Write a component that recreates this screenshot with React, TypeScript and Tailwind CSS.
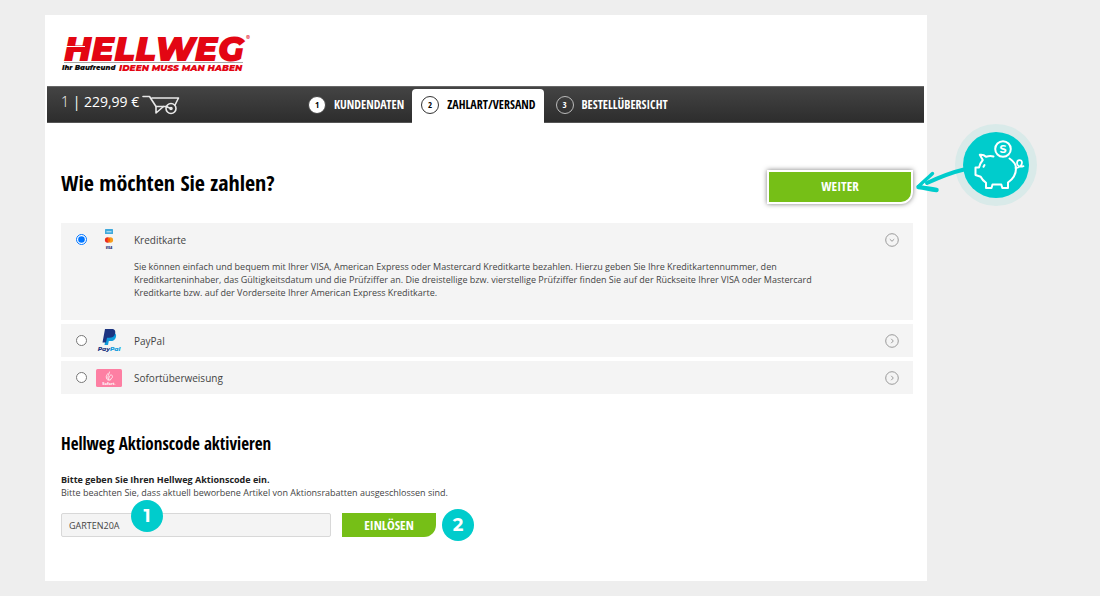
import React, { useState } from 'react';

const condensed = "font-['Open_Sans_Condensed','Open_Sans',sans-serif]";

function Logo() {
  return (
    <svg width="196" height="52" viewBox="0 0 196 52" role="img" aria-label="Hellweg" className="block">
      <text x="3" y="36" fontFamily="Montserrat, sans-serif" fontWeight="900" fontStyle="italic" fontSize="34" fill="#e30613">
        HELLWEG
      </text>
      <path d="M4 21.500H24" stroke="#fff" strokeWidth="1" />
      <text x="185" y="15" fontFamily="Inter, sans-serif" fontSize="6" fill="#e30613">
        ®
      </text>
      <path d="M3 37.500H182" stroke="#a8a8a8" strokeWidth="1" />
      <text x="1" y="45" fontFamily="Montserrat, sans-serif" fontWeight="900" fontStyle="italic" fontSize="7" fill="#111">
        Ihr Baufreund
      </text>
      <text x="58" y="46" fontFamily="Montserrat, sans-serif" fontWeight="900" fontStyle="italic" fontSize="9" fill="#e30613">
        IDEEN MUSS MAN HABEN
      </text>
    </svg>
  );
}

function Wheelbarrow() {
  return (
    <svg width="38" height="20" viewBox="0 0 38 20" fill="none" stroke="#e8e8e8" strokeWidth="1.6" strokeLinejoin="round" strokeLinecap="round" aria-hidden="true">
      <path d="M1 1.500h6.500l6.500 10h11M10 3H36.500L33 10" />
      <path d="M14 11.500v6.500l7.500-6.500" />
      <circle cx="29" cy="13.500" r="5" />
      <circle cx="29" cy="13.500" r="1" />
      <path d="M24 11.500l5 2" />
    </svg>
  );
}

function Step({ n, label, state }: { n: number; label: string; state: 'done' | 'active' | 'open' }) {
  const tab = state === 'active' ? 'bg-white text-black rounded-t pl-[9px]' : state === 'done' ? 'text-white pl-2' : 'text-white pl-3';
  const dot =
    state === 'done'
      ? 'bg-white text-black border-[#444]'
      : state === 'active'
        ? 'bg-white text-black border-[#333]'
        : 'text-white border-[#bbb]';
  return (
    <li className={`flex pr-2 ${tab}`}>
      <a href="#" aria-current={state === 'active' ? 'step' : undefined} className="flex items-center gap-2 pb-[3px]">
        <span className={`flex size-[18px] items-center justify-center rounded-full border text-[9px] leading-none ${dot}`}>{n}</span>
        <span className="text-[12px] leading-4">{label}</span>
      </a>
    </li>
  );
}

function CardLogos() {
  return (
    <svg width="14" height="22" viewBox="-2 0 14 22" aria-hidden="true">
      <rect x="1" y="0" width="8" height="5" rx="0.5" fill="#3fa9dc" />
      <rect x="2.500" y="2" width="5" height="1.400" fill="#a5d8f0" />
      <circle cx="3.600" cy="11" r="2.700" fill="#eb2a1c" />
      <circle cx="6.400" cy="11" r="2.700" fill="#f79e1b" />
      <path d="M5 8.700a2.700 2.700 0 0 1 0 4.600a2.700 2.700 0 0 1 0-4.600" fill="#ff5f00" />
      <text x="5" y="20" textAnchor="middle" fontFamily="Open Sans, sans-serif" fontWeight="800" fontStyle="italic" fontSize="3" fill="#1a1f71">
        VISA
      </text>
    </svg>
  );
}

function PayPalLogo() {
  return (
    <svg width="28" height="26" viewBox="0 0 28 26" aria-hidden="true">
      <path d="M12 4.500h6.500c2.500.5 3 2.500 2.400 4.700c-.8 2.800-2.800 3.900-5.600 3.900h-1.500L13 17H9.500z" fill="#0f9bdc" />
      <path d="M10 1h6.500c3.300 0 4.300 2 3.600 4.700c-.8 3-3 4-5.900 4H12L11 14.500H7.500z" fill="#1c3481" />
      <text x="14" y="23" textAnchor="middle" fontFamily="Montserrat, sans-serif" fontWeight="800" fontStyle="italic" fontSize="6" fill="#1c3481">
        Pay<tspan fill="#0f9bdc">Pal</tspan>
      </text>
    </svg>
  );
}

function SofortLogo() {
  return (
    <svg width="26" height="18" viewBox="0 0 26 18" aria-hidden="true">
      <rect width="26" height="18" rx="1.500" fill="#fd7fa3" />
      <g fill="none" stroke="#fff" strokeWidth="0.900" strokeLinecap="round" opacity="0.850">
        <path d="M10.500 9.500c-1-3 .5-3.500 1.500-5M12 10c-.8-3 1-4 1.500-7M14 10.500c3-1 3-4 1.500-4.500s-2.500 2-3 4.500" />
        <path d="M11 10.500c1 1 3 1 4 0" />
      </g>
      <text x="13" y="16" textAnchor="middle" fontFamily="Open Sans, sans-serif" fontWeight="700" fontSize="4" fill="#fff">
        Sofort.
      </text>
    </svg>
  );
}

function Chevron({ open }: { open: boolean }) {
  return (
    <svg width="14" height="14" viewBox="0 0 14 14" fill="none" stroke="#9a9a9a" strokeWidth="1" aria-hidden="true">
      <circle cx="7" cy="7" r="6.300" />
      <path d={open ? 'M4.800 6.200L7 8.300L9.200 6.200' : 'M6.200 4.800L8.300 7L6.200 9.200'} />
    </svg>
  );
}

function PiggyBadge() {
  return (
    <svg width="124" height="84" viewBox="0 0 124 84" fill="none" aria-hidden="true" className="block">
      <circle cx="83" cy="42" r="41" fill="#d9eae9" />
      <circle cx="83" cy="42" r="33" fill="#00cccc" />
      <g stroke="#00cccc" strokeLinecap="round">
        <path d="M51 46.500C36 50 28 53.500 14 60" strokeWidth="4" />
        <path d="M19.500 50.500C15 55 11 58 5.500 63.500" strokeWidth="3.400" />
        <path d="M5.500 64C12 65 17 66 23.500 67" strokeWidth="4.500" />
      </g>
      <g stroke="#fff" strokeWidth="2" strokeLinejoin="round" strokeLinecap="round">
        <path d="M80.500 33.500c-2.500-.8-5-.5-7.500.2c-1.800-1.800-4-2.200-6.200-1.900l3 5.200c-1.800 2-3 4.500-3.800 7.500h-3.500v7.500l5.200 1.800c1.200 2.500 3.300 4.500 5.300 6v5.200h5.500l1-3.500h8.800l1 3.500h5.700v-5.500c5-3.500 8-8.200 8-14c0-3.600-1.500-6.700-6.500-10" />
        <path d="M102.500 45c3.500 0 6.500-2.500 6.500-5.300c0-3.600-5-3.400-5 .3c0 3.200 3 4.500 6.500 3.200" strokeWidth="1.800" />
        <path d="M71.500 42l-1 1.800" />
        <circle cx="90" cy="26" r="7.800" />
      </g>
      <text x="90" y="30" textAnchor="middle" fontFamily="Montserrat, sans-serif" fontWeight="700" fontSize="11" fill="#fff">
        S
      </text>
    </svg>
  );
}

function Marker({ n, className }: { n: number; className: string }) {
  return (
    <span
      className={`absolute flex size-8 items-center justify-center rounded-full bg-[#00cccc] font-['Montserrat',sans-serif] text-[18px] leading-none font-bold text-white ${className}`}
    >
      {n}
    </span>
  );
}

const methods = [
  {
    id: 'card',
    label: 'Kreditkarte',
    logo: <CardLogos />,
    text: 'Sie können einfach und bequem mit Ihrer VISA, American Express oder Mastercard Kreditkarte bezahlen. Hierzu geben Sie Ihre Kreditkartennummer, den Kreditkarteninhaber, das Gültigkeitsdatum und die Prüfziffer an. Die dreistellige bzw. vierstellige Prüfziffer finden Sie auf der Rückseite Ihrer VISA oder Mastercard Kreditkarte bzw. auf der Vorderseite Ihrer American Express Kreditkarte.',
  },
  { id: 'paypal', label: 'PayPal', logo: <PayPalLogo />, text: '' },
  { id: 'sofort', label: 'Sofortüberweisung', logo: <SofortLogo />, text: '' },
];

export default function App() {
  const [selected, setSelected] = useState('card');
  const [code, setCode] = useState('GARTEN20A');

  return (
    <div className="min-h-screen bg-[#eeeeee] py-[15px] pr-[173px] pl-[45px] font-['Open_Sans',sans-serif] text-[#333]">
      <div className="bg-white pb-11">
        <header>
          <div className="px-4 pt-[10px] pb-[9px]">
            <Logo />
          </div>
          <div className="mr-[3px] ml-[2px] flex h-[37px] border-t border-b border-t-[#666] border-b-[#555] bg-linear-to-b from-[#444] to-[#2d2d2d]">
            <a href="#" className="flex w-[253px] items-start gap-[3px] pt-[3px] pl-[14px] text-[14px] leading-6 text-white">
              <span className="whitespace-nowrap">
                <span className="font-light">1</span> | 229,99 €
              </span>
              <span className="pt-[5px]">
                <Wheelbarrow />
              </span>
            </a>
            <nav aria-label="Bestellschritte" className="flex pt-[2px]">
              <ol className={`-mb-px flex font-bold ${condensed}`}>
                <Step n={1} label="KUNDENDATEN" state="done" />
                <Step n={2} label="ZAHLART/VERSAND" state="active" />
                <Step n={3} label="BESTELLÜBERSICHT" state="open" />
              </ol>
            </nav>
          </div>
        </header>

        <main className="pr-[14px] pl-4">
          <div className="flex items-start justify-between pt-[47px]">
            <h1 className={`text-[22px] leading-6 font-bold text-black ${condensed}`}>Wie möchten Sie zahlen?</h1>
            <div className="relative">
              <button
                type="button"
                className={`block h-[34px] w-[146px] rounded-br-xl border-2 border-white bg-[#76bf17] text-[13px] font-bold text-white shadow-[0_0_5px_rgba(0,0,0,0.5)] ${condensed}`}
              >
                WEITER
              </button>
              <div className="pointer-events-none absolute -top-[47px] left-full">
                <PiggyBadge />
              </div>
            </div>
          </div>

          <div role="radiogroup" aria-label="Zahlart" className="mt-[19px] flex flex-col gap-1">
            {methods.map((m) => {
              const open = m.id === selected && m.text !== '';
              return (
                <div key={m.id} className="bg-[#f4f4f4]">
                  <label htmlFor={m.id} className="flex h-[33px] items-center pr-[14px] pl-[15px]">
                    <input
                      id={m.id}
                      type="radio"
                      name="payment"
                      checked={m.id === selected}
                      onChange={() => setSelected(m.id)}
                      className="size-[11px]"
                    />
                    <span className="mx-2 flex w-[28px] justify-center">{m.logo}</span>
                    <span className="flex-1 pl-[3px] text-[10px] leading-4 text-[#444]">{m.label}</span>
                    <Chevron open={open} />
                  </label>
                  {open && <p className="pt-1 pr-[86px] pb-[21px] pl-[73px] text-[9px] leading-[13px] text-[#444]">{m.text}</p>}
                </div>
              );
            })}
          </div>

          <section className="pt-[37px]">
            <h2 className={`text-[17px] leading-[26px] font-bold text-black ${condensed}`}>Hellweg Aktionscode aktivieren</h2>
            <p className="pt-4 text-[9px] leading-[13px] font-bold text-[#222]">
              <label htmlFor="code">Bitte geben Sie Ihren Hellweg Aktionscode ein.</label>
            </p>
            <p className="text-[9px] leading-[13px] text-[#444]">
              Bitte beachten Sie, dass aktuell beworbene Artikel von Aktionsrabatten ausgeschlossen sind.
            </p>
            <div className="flex gap-[11px] pt-[14px]">
              <div className="relative">
                <input
                  id="code"
                  type="text"
                  value={code}
                  onChange={(e) => setCode(e.target.value)}
                  className="block h-6 w-[270px] rounded-xs border border-[#d8d8d8] bg-[#f4f4f4] px-[7px] text-[9px] text-[#444]"
                />
                <Marker n={1} className="-top-[13px] left-[70px]" />
              </div>
              <div className="relative">
                <button type="button" className={`block h-6 w-[94px] rounded-br-xl bg-[#76bf17] text-[13px] leading-6 font-bold text-white ${condensed}`}>
                  EINLÖSEN
                </button>
                <Marker n={2} className="-top-1 left-[100px]" />
              </div>
            </div>
          </section>
        </main>
      </div>
    </div>
  );
}
